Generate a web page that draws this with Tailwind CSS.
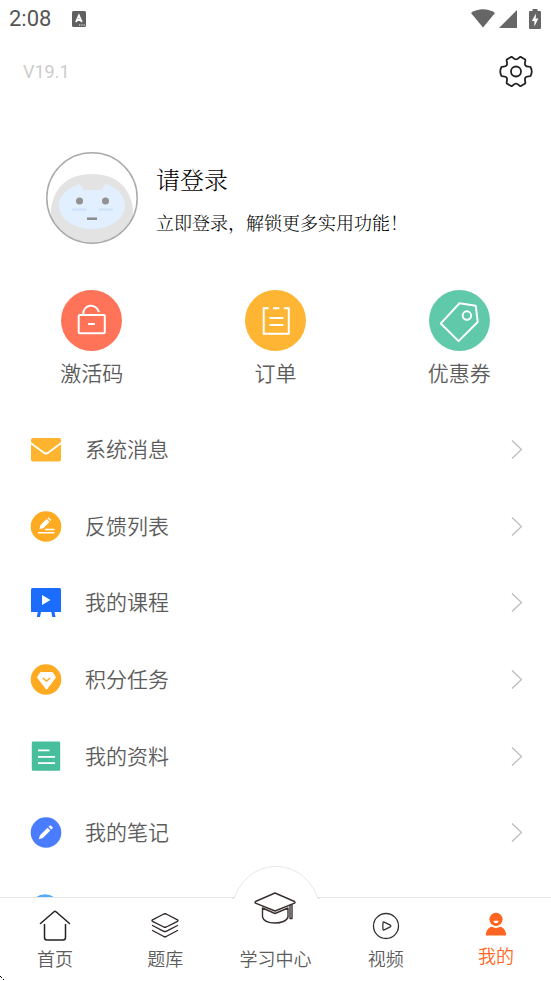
<!DOCTYPE html>
<html lang="zh-CN">
<head>
<meta charset="utf-8">
<meta name="viewport" content="width=device-width, initial-scale=1">
<title>我的</title>
<script src="https://cdn.jsdelivr.net/npm/@tailwindcss/browser@4"></script>
</head>
<body class="bg-white font-['Roboto','Noto_Sans_CJK_SC',sans-serif] font-[350] text-[#5c5c5c]">
<div class="relative flex h-screen flex-col overflow-hidden">

  <!-- Status bar -->
  <div class="flex h-[37px] shrink-0 items-center pr-[10px] pl-[9px]">
    <span class="text-[22px] leading-6 font-normal text-[#555]">2:08</span>
    <svg class="ml-[20px] size-[16px]" viewBox="0 0 16 16" aria-hidden="true"><rect x="1" width="14" height="16" rx="1.5" fill="#606060"/><path d="M5 11.2 7.9 4.5 10.8 11.2M6 9H9.800" fill="none" stroke="#fff" stroke-width="1.800"/><path d="M8 14h1.300M10.300 14h1.300M12.600 14h1.300" stroke="#fff" stroke-width="1.200"/></svg>
    <div class="ml-auto flex items-center">
      <svg class="h-[20px] w-[24px]" viewBox="0 0 24 20" aria-hidden="true"><path d="M0 4C7-1 17-1 24 4L12 18.500Z" fill="#666"/></svg>
      <svg class="ml-[4px] h-[18px] w-[18px]" viewBox="0 0 18 18" aria-hidden="true"><path d="M18 0V18H0Z" fill="#666"/></svg>
      <svg class="ml-[12px] h-[20px] w-[12px]" viewBox="0 0 12 20" aria-hidden="true"><path d="M3.500 0h5v2H11q1 0 1 1V19q0 1-1 1H1q-1 0-1-1V3q0-1 1-1H3.500Z" fill="#666"/><path d="M7 4.500 2.800 12H5.400V17.500L9.300 9.500H6.700Z" fill="#fff"/></svg>
    </div>
  </div>

  <header class="flex h-[69px] shrink-0 items-center justify-between pr-[18px] pl-[23px]">
    <span class="text-[18px] leading-6 font-normal text-[#ccc]">V19.1</span>
    <button type="button" aria-label="设置">
      <svg class="size-[34px]" viewBox="0 0 34 34" fill="none" stroke="#222" stroke-width="1.800" stroke-linejoin="round"><path d="M12.500 1.800C14 1.800 14.500 4.300 17 4.300S20 1.800 21.500 1.800L26.200 4.500C27 5.700 25.100 8 26.300 10.200S30.300 11.200 31.500 12Q34 16.500 31.500 21C30.300 21.800 27.500 20.700 26.300 22.800S27 27.300 26.200 28.500L21.500 31.200C20 31.200 19.500 28.700 17 28.700S14 31.200 12.500 31.200L7.800 28.500C7 27.300 8.900 25 7.700 22.800S3.700 21.800 2.500 21Q0 16.500 2.500 12C3.700 11.200 6.500 12.300 7.700 10.200S7 5.700 7.800 4.500Z"/><circle cx="17" cy="16.500" r="5"/></svg>
    </button>
  </header>

  <main class="min-h-0 flex-1 overflow-hidden">
    <a href="#login" class="mt-[46px] flex items-center gap-[18px] pl-[46px] text-black">
      <svg class="size-[92px] shrink-0" viewBox="0 0 92 92" role="img" aria-label="头像">
        <clipPath id="face"><circle cx="46" cy="46" r="45.500"/></clipPath>
        <g clip-path="url(#face)"><path d="M46 22C69 22 84 34 87 57V92H5V57C8 34 23 22 46 22Z" fill="#e3e3e3"/><path d="M34 32 37.500 38H56L59.500 32C71 35.500 79 43.500 79 53.500C79 67 64 77 46 77S13 67 13 53.500C13 43.500 22 35 34 32Z" fill="#e2effe"/></g>
        <circle cx="33.500" cy="49" r="3.500" fill="#929292"/><circle cx="59.500" cy="49" r="3.500" fill="#929292"/>
        <path d="M26 57.500H40.500M52.500 57.500H67" stroke="#cde1fa" stroke-width="2"/><path d="M41 66.700H51" stroke="#8c8c8c" stroke-width="2.500"/>
        <circle cx="46" cy="46" r="45.200" fill="none" stroke="#aaa" stroke-width="1.500"/>
      </svg>
      <div class="font-['Noto_Serif_CJK_SC','Noto_Sans_CJK_SC',serif] font-light">
        <p class="text-[24px] leading-8">请登录</p>
        <p class="mt-[15px] text-[18px] leading-6">立即登录，解锁更多实用功能！</p>
      </div>
    </a>

    <div class="mt-[46px] grid grid-cols-3 text-[21px] leading-8">
      <a href="#code" class="flex flex-col items-center gap-[7px]">
        <svg class="size-[61px]" viewBox="0 0 62 62" fill="none" stroke="#fff" stroke-width="2" aria-hidden="true"><circle cx="31" cy="31" r="31" fill="#ff7358" stroke="none"/><rect x="18" y="25.500" width="26.500" height="18.500" rx="1"/><path d="M22.500 25C22.500 13.500 36.500 13.500 38.500 22.500M27.500 34.500H34.500"/></svg>
        <span>激活码</span>
      </a>
      <a href="#orders" class="flex flex-col items-center gap-[7px]">
        <svg class="size-[61px]" viewBox="0 0 62 62" fill="none" stroke="#fff" stroke-width="2" aria-hidden="true"><circle cx="31" cy="31" r="31" fill="#ffb534" stroke="none"/><path d="M24 18.500H19V44.500H44.500V18.500H39.500M28.500 18.500H35M25 28.500H39M25 35.500H39"/></svg>
        <span>订单</span>
      </a>
      <a href="#coupons" class="flex flex-col items-center gap-[7px]">
        <svg class="size-[61px]" viewBox="0 0 62 62" fill="none" stroke="#fff" stroke-width="2" stroke-linejoin="round" aria-hidden="true"><circle cx="31" cy="31" r="31" fill="#5fc9aa" stroke="none"/><path d="M12 34 31 13.500 47.500 16 49.500 32.500 30 52Z"/><circle cx="38.500" cy="26" r="4.300"/></svg>
        <span>优惠券</span>
      </a>
    </div>

    <nav aria-label="功能" class="mt-[22px] grid h-[536px] grid-rows-7 text-[21px] leading-8">
      <a href="#messages" class="flex items-center pr-[28px] pl-[30px]">
        <svg class="size-[32px]" viewBox="0 0 32 32" aria-hidden="true"><rect x="1" y="4" width="30" height="23.500" rx="2" fill="#ffb42f"/><path d="M0 8.500 13.500 18.500Q16 20.500 18.500 18.500L32 8.500" fill="none" stroke="#fff" stroke-width="1.800"/></svg>
        <span class="ml-[23px] flex-1">系统消息</span>
        <svg class="h-[20px] w-[12px]" viewBox="0 0 12 20" aria-hidden="true"><path d="M1 .5 10.500 9.500 1 18.500" fill="none" stroke="#bbb" stroke-width="1.200"/></svg>
      </a>
      <a href="#feedback" class="flex items-center pr-[28px] pl-[30px]">
        <svg class="size-[32px]" viewBox="0 0 32 32" aria-hidden="true"><circle cx="16" cy="15.500" r="15.300" fill="#ffab22"/><path d="M10.300 14.300 16.600 8 19.600 11 13.300 17.300 9.500 18.100ZM17.500 7.200 18.500 6.300 21.300 9.100 20.400 10.100Z" fill="#fff"/><path d="M15 18.500H24.500M8 21.800H24.500" stroke="#fff" stroke-width="1.400"/></svg>
        <span class="ml-[23px] flex-1">反馈列表</span>
        <svg class="h-[20px] w-[12px]" viewBox="0 0 12 20" aria-hidden="true"><path d="M1 .5 10.500 9.500 1 18.500" fill="none" stroke="#bbb" stroke-width="1.200"/></svg>
      </a>
      <a href="#courses" class="flex items-center pr-[28px] pl-[30px]">
        <svg class="size-[32px]" viewBox="0 0 32 32" aria-hidden="true"><path d="M2.500 1H29.500Q31 1 31 2.500V25H24.500L25.500 30H22.300L21.300 25H11L10 30H6.800L7.800 25H1V2.500Q1 1 2.500 1Z" fill="#1a6dff"/><path d="M12 8 20.500 13 12 18Z" fill="#fff"/></svg>
        <span class="ml-[23px] flex-1">我的课程</span>
        <svg class="h-[20px] w-[12px]" viewBox="0 0 12 20" aria-hidden="true"><path d="M1 .5 10.500 9.500 1 18.500" fill="none" stroke="#bbb" stroke-width="1.200"/></svg>
      </a>
      <a href="#points" class="flex items-center pr-[28px] pl-[30px]">
        <svg class="size-[32px]" viewBox="0 0 32 32" aria-hidden="true"><circle cx="16" cy="15.500" r="15.300" fill="#ffab22"/><path d="M10.500 8.500H22.500L25.500 13.500 16.500 25.300 7.500 13.500Z" fill="#fff" stroke="#fff" stroke-linejoin="round"/><path d="M12.800 14 16.500 17.100 20.200 14" fill="none" stroke="#ffab22" stroke-width="1.500"/></svg>
        <span class="ml-[23px] flex-1">积分任务</span>
        <svg class="h-[20px] w-[12px]" viewBox="0 0 12 20" aria-hidden="true"><path d="M1 .5 10.500 9.500 1 18.500" fill="none" stroke="#bbb" stroke-width="1.200"/></svg>
      </a>
      <a href="#materials" class="flex items-center pr-[28px] pl-[30px]">
        <svg class="size-[32px]" viewBox="0 0 32 32" aria-hidden="true"><rect x="1.800" y=".5" width="28.400" height="29.300" rx="1.200" fill="#48bf9c"/><path d="M8 9.300H19.500M8 15.800H25M8 22.100H25" stroke="#fff" stroke-width="1.700"/></svg>
        <span class="ml-[23px] flex-1">我的资料</span>
        <svg class="h-[20px] w-[12px]" viewBox="0 0 12 20" aria-hidden="true"><path d="M1 .5 10.500 9.500 1 18.500" fill="none" stroke="#bbb" stroke-width="1.200"/></svg>
      </a>
      <a href="#notes" class="flex items-center pr-[28px] pl-[30px]">
        <svg class="size-[32px]" viewBox="0 0 32 32" aria-hidden="true"><circle cx="16" cy="15.500" r="15.300" fill="#4a7cff"/><path d="M10 18.300 17.600 10.700 20.400 13.500 12.800 21.100 8.800 22.300ZM18.500 9.800 19.600 8.700Q20.300 8 21 8.700L22.400 10.100Q23.100 10.800 22.400 11.500L21.300 12.600Z" fill="#fff"/></svg>
        <span class="ml-[23px] flex-1">我的笔记</span>
        <svg class="h-[20px] w-[12px]" viewBox="0 0 12 20" aria-hidden="true"><path d="M1 .5 10.500 9.500 1 18.500" fill="none" stroke="#bbb" stroke-width="1.200"/></svg>
      </a>
      <a href="#more" aria-label="更多" class="flex items-center pr-[28px] pl-[30px]">
        <svg class="size-[32px]" viewBox="0 0 32 32" aria-hidden="true"><circle cx="15" cy="15.500" r="15.300" fill="#55abfb"/></svg>
      </a>
    </nav>
  </main>

  <nav aria-label="主导航" class="relative grid h-[84px] shrink-0 grid-cols-5 border-t border-[#e6e6e6] bg-white text-[18px] leading-6">
    <svg class="absolute bottom-[49px] left-1/2 h-[66px] w-[88px] -translate-x-1/2" viewBox="0 0 88 66" aria-hidden="true"><path d="M2 32.500C17-10 71-10 86 32.500V66H2Z" fill="#fff"/><path d="M0 32.500H2C17-10.200 71-10.200 86 32.500H88" fill="none" stroke="#e6e6e6"/></svg>
    <a href="#home" class="flex flex-col items-center pt-[12px]">
      <svg class="h-[32px] w-[32px]" viewBox="0 0 32 32" fill="none" stroke="#222" stroke-width="1.500" stroke-linecap="round" stroke-linejoin="round" aria-hidden="true"><path d="M1.500 13.500 15 1.800Q16 .9 17 1.800L30.500 13.500M5.500 14.500V27.500Q5.500 30 8 30H24Q26.500 30 26.500 27.500V14.500"/></svg>
      <span class="mt-[6px]">首页</span>
    </a>
    <a href="#bank" class="flex flex-col items-center pt-[12px]">
      <svg class="h-[32px] w-[32px]" viewBox="0 0 32 32" fill="none" stroke="#32292a" stroke-width="1.400" stroke-linecap="round" stroke-linejoin="round" aria-hidden="true"><path d="M14.800 4Q16 3.500 17.200 4L28.500 9.800Q29.500 10.500 28.500 11.300L17.200 17Q16 17.500 14.800 17L3.500 11.300Q2.500 10.500 3.500 9.800ZM3.500 15.500 14.800 21.300Q16 21.800 17.200 21.300L28.500 15.500M3.500 20.500 14.800 26.500Q16 27 17.200 26.500L28.500 20.500"/></svg>
      <span class="mt-[6px]">题库</span>
    </a>
    <a href="#study" class="relative flex flex-col items-center justify-end pb-[9px]">
      <svg class="absolute -top-[6px] h-[32px] w-[42px]" viewBox="0 0 42 32" fill="none" stroke="#3a3030" stroke-width="1.400" stroke-linejoin="round" aria-hidden="true"><path d="M21 1 40.500 9.500Q41.500 10.500 40.500 11.200L21 19 1.500 11.200Q.5 10.500 1.500 9.500ZM8.500 16 21 21.500 34 16V25C33 29 27 31 21 31S9.500 29 8.500 25ZM36 13.500V26.500H38V12.700"/></svg>
      <span>学习中心</span>
    </a>
    <a href="#video" class="flex flex-col items-center pt-[12px]">
      <svg class="h-[32px] w-[32px]" viewBox="0 0 32 32" fill="none" stroke="#333" stroke-width="1.300" stroke-linejoin="round" aria-hidden="true"><circle cx="16" cy="16" r="12.500"/><path d="M13 13Q13 11.700 14.200 12.100L20.300 15.200Q21.300 16 20.300 16.800L14.200 19.900Q13 20.300 13 19Q12.600 16 13 13Z"/></svg>
      <span class="mt-[6px]">视频</span>
    </a>
    <a href="#me" aria-current="page" class="flex flex-col items-center pt-[12px] text-[#ff6422]">
      <svg class="h-[28px] w-[28px]" viewBox="0 0 28 28" aria-hidden="true"><circle cx="14" cy="9.300" r="6.600" fill="#ff6422"/><path d="M3.800 25.500C4 20 7 17.500 9.500 16.800Q14 19 18.500 16.800C21 17.500 24 20 24.200 25.500Z" fill="#ff6422"/><path d="M11.300 10.800H16.700Q16.500 13.200 14 13.200T11.300 10.800Z" fill="#fff"/></svg>
      <span class="mt-[7px]">我的</span>
    </a>
    <svg class="absolute bottom-0 left-0 h-[5px] w-[5px]" viewBox="0 0 5 5" aria-hidden="true"><path d="M0 0H1V1H2V2H1V1H0ZM3 3H4V4H3Z" fill="#000"/></svg>
  </nav>
</div>
</body>
</html>
